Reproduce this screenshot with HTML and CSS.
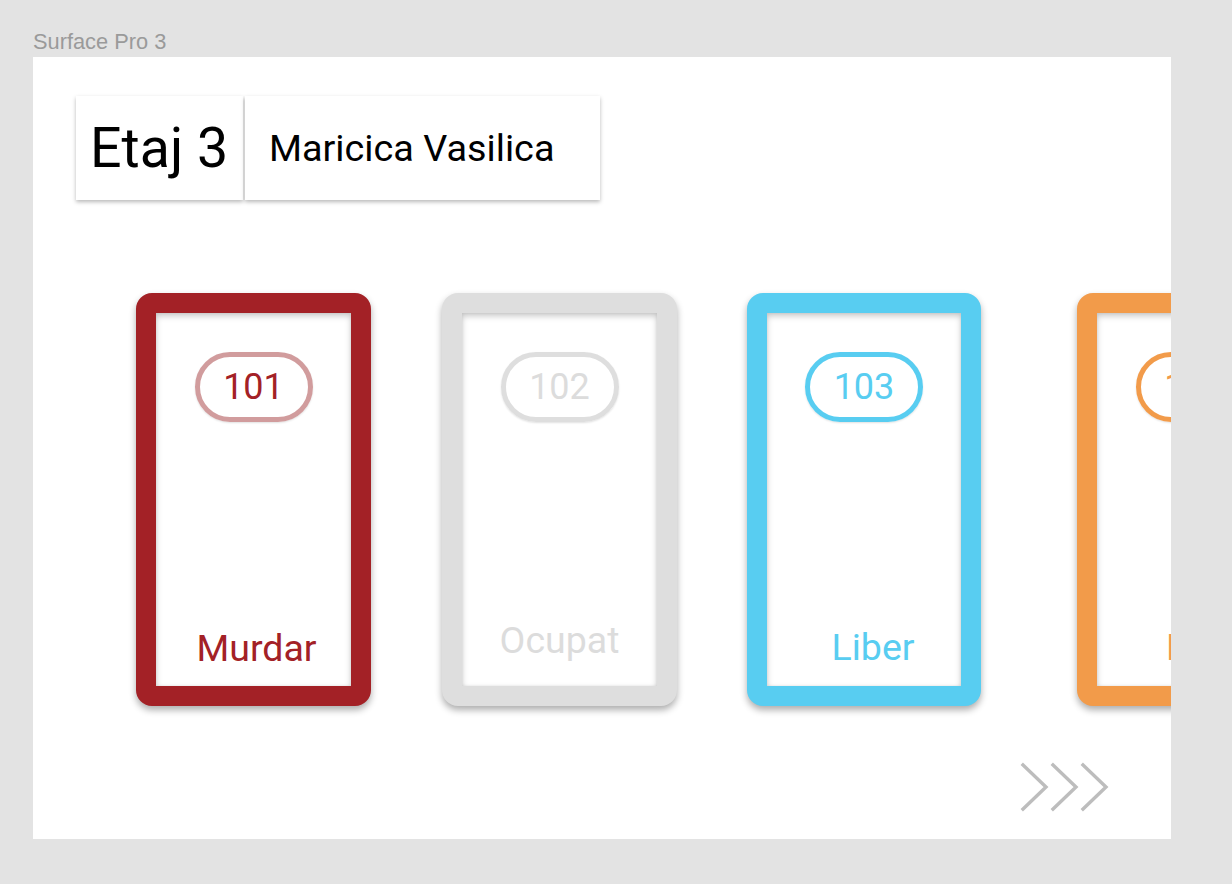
FILE: index.html
```html
<!DOCTYPE html>
<html lang="ro">
<head>
<meta charset="utf-8">
<title>Surface Pro 3</title>
<link rel="stylesheet" href="styles.css">
</head>
<body>
  <div class="device-label">Surface Pro 3</div>
  <main class="artboard">
    <header class="header">
      <div class="floor">Etaj 3</div>
      <div class="person">Maricica Vasilica</div>
    </header>
    <section class="rooms">
      <div class="room room--dirty">
        <div class="pill">101</div>
        <div class="status">Murdar</div>
      </div>
      <div class="room room--busy">
        <div class="pill">102</div>
        <div class="status">Ocupat</div>
      </div>
      <div class="room room--free">
        <div class="pill">103</div>
        <div class="status">Liber</div>
      </div>
      <div class="room room--other">
        <div class="pill">104</div>
        <div class="status">Liber</div>
      </div>
    </section>
    <footer class="pager">
      <svg class="chevrons" width="90" height="50" viewBox="0 0 90 50" aria-hidden="true">
        <g fill="none" stroke="#bdbdbd" stroke-width="3.4" stroke-linecap="square" stroke-linejoin="miter">
          <polyline points="3,3 26,25 3,47"/>
          <polyline points="33,3 56,25 33,47"/>
          <polyline points="63,3 86,25 63,47"/>
        </g>
      </svg>
    </footer>
  </main>
</body>
</html>
```

FILE: styles.css
```css
html, body {
  margin: 0;
  padding: 0;
}

body {
  background: #e3e3e3;
  padding: 30px 0 0 33px;
  width: 1199px;
  height: 854px;
  overflow: hidden;
  font-family: Roboto, "Liberation Sans", sans-serif;
}

.device-label {
  font-family: "Liberation Sans", Arial, sans-serif;
  font-size: 21.8px;
  line-height: 24px;
  color: #9a9a9a;
  margin-bottom: 3px;
}

.artboard {
  width: 1138px;
  height: 782px;
  background: #fff;
  overflow: hidden;
  box-sizing: border-box;
  padding-top: 39px;
  display: flex;
  flex-direction: column;
}

.header {
  display: flex;
  gap: 2px;
  margin-left: 43px;
  height: 104px;
}

.floor,
.person {
  background: #fff;
  box-shadow: 0 2px 4px rgba(0, 0, 0, 0.28);
  display: flex;
  align-items: center;
  color: #000;
  white-space: nowrap;
}

.floor {
  width: 167px;
  box-sizing: border-box;
  padding-left: 14px;
  font-size: 55.5px;
}

.person {
  width: 355px;
  box-sizing: border-box;
  padding-left: 24px;
  font-size: 37.8px;
}

.rooms {
  display: flex;
  gap: 71px;
  margin-top: 93px;
  margin-left: 103px;
  height: 413px;
}

.room {
  flex: 0 0 auto;
  width: 235px;
  height: 413px;
  box-sizing: border-box;
  border: 20px solid;
  border-radius: 16px;
  background: #fff;
  box-shadow: 0 4px 7px rgba(0, 0, 0, 0.32), inset 0 3px 6px rgba(0, 0, 0, 0.22), inset 0 0 3px rgba(0, 0, 0, 0.08);
  display: flex;
  flex-direction: column;
  align-items: center;
  justify-content: space-between;
  padding: 39px 0 17px;
}

.pill {
  width: 118px;
  height: 70px;
  box-sizing: border-box;
  border: 5px solid;
  border-radius: 35px;
  font-size: 36px;
  line-height: 60px;
  text-align: center;
  box-shadow: 0 1px 2px rgba(0, 0, 0, 0.12);
}

.status {
  font-size: 37.5px;
  line-height: 42px;
  white-space: nowrap;
}

.room--dirty {
  border-color: #a32126;
  color: #a32126;
}
.room--dirty .pill {
  border-color: #d19c9d;
}
.room--dirty .status {
  padding-left: 6px;
}

.room--busy {
  border-color: #dedede;
  color: #dcdcdc;
  padding-bottom: 25px;
}
.room--busy .pill {
  border-color: #dedede;
}

.room--free {
  width: 234px;
  margin-left: -1px;
  border-color: #58cdf1;
  color: #58cdf1;
  padding-bottom: 18px;
}
.room--free .pill {
  border-color: #58cdf1;
}
.room--free .status {
  padding-left: 18px;
}

.room--other {
  margin-left: 25px;
  border-color: #f29b4a;
  color: #f29b4a;
  padding-bottom: 18px;
}
.room--other .pill {
  border-color: #f29b4a;
}
.room--other .status {
  padding-left: 26px;
}

.pager {
  display: flex;
  justify-content: flex-end;
  padding-right: 61px;
  margin-top: 56px;
}

.chevrons {
  display: block;
}
```
